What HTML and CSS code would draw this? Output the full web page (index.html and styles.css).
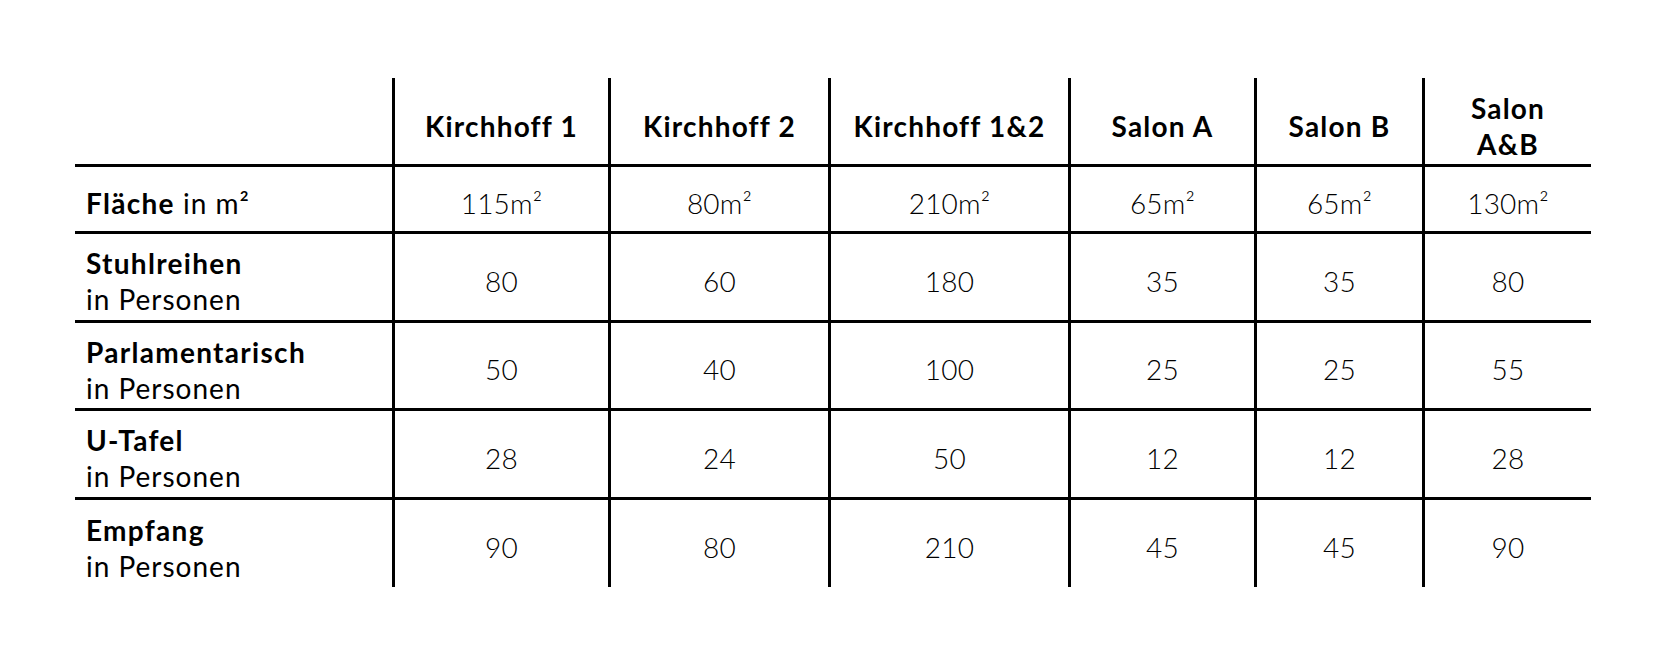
FILE: index.html
```html
<!DOCTYPE html>
<html lang="de">
<head>
<meta charset="utf-8">
<title>Räume</title>
<link rel="stylesheet" href="styles.css">
</head>
<body>
<div class="page">
  <div class="grid" role="table">
    <div class="cell head label"></div>
    <div class="cell head">Kirchhoff 1</div>
    <div class="cell head">Kirchhoff 2</div>
    <div class="cell head">Kirchhoff 1&amp;2</div>
    <div class="cell head">Salon A</div>
    <div class="cell head">Salon B</div>
    <div class="cell head">Salon<br>A&amp;B</div>

    <div class="cell label row single"><span><b>Fläche</b> in m²</span></div>
    <div class="cell row num">115m²</div>
    <div class="cell row num">80m²</div>
    <div class="cell row num">210m²</div>
    <div class="cell row num">65m²</div>
    <div class="cell row num">65m²</div>
    <div class="cell row num">130m²</div>

    <div class="cell label row"><span><b>Stuhlreihen</b><br>in Personen</span></div>
    <div class="cell row num">80</div>
    <div class="cell row num">60</div>
    <div class="cell row num">180</div>
    <div class="cell row num">35</div>
    <div class="cell row num">35</div>
    <div class="cell row num">80</div>

    <div class="cell label row"><span><b>Parlamentarisch</b><br>in Personen</span></div>
    <div class="cell row num">50</div>
    <div class="cell row num">40</div>
    <div class="cell row num">100</div>
    <div class="cell row num">25</div>
    <div class="cell row num">25</div>
    <div class="cell row num">55</div>

    <div class="cell label row"><span><b>U-Tafel</b><br>in Personen</span></div>
    <div class="cell row num">28</div>
    <div class="cell row num">24</div>
    <div class="cell row num">50</div>
    <div class="cell row num">12</div>
    <div class="cell row num">12</div>
    <div class="cell row num">28</div>

    <div class="cell label row"><span><b>Empfang</b><br>in Personen</span></div>
    <div class="cell row num">90</div>
    <div class="cell row num">80</div>
    <div class="cell row num">210</div>
    <div class="cell row num">45</div>
    <div class="cell row num">45</div>
    <div class="cell row num">90</div>
  </div>
</div>
</body>
</html>
```
FILE: styles.css
```css
html, body {
  margin: 0;
  padding: 0;
  background: #ffffff;
}

.page {
  padding: 78px 0 0 75px;
  font-family: "Lato", "Liberation Sans", sans-serif;
  color: #000000;
  font-size: 28px;
}

.grid {
  display: grid;
  width: 1516px;
  grid-template-columns: 317px 216px 220px 240px 186px 168px 169px;
  grid-template-rows: 86px 67px 89px 88px 89px 90px;
}

.cell {
  box-sizing: border-box;
  display: flex;
  align-items: center;
  justify-content: center;
  text-align: center;
  border-left: 3px solid #000;
}

.cell.label {
  border-left: none;
  justify-content: flex-start;
  text-align: left;
  padding-left: 11px;
  padding-top: 8px;
  line-height: 36px;
  letter-spacing: 1px;
}

.cell.label.single {
  padding-top: 8px;
  line-height: normal;
}

.cell.row {
  border-top: 3px solid #000;
}

.num {
  font-weight: 300;
  padding-top: 7px;
  letter-spacing: 0.2px;
}

.head {
  font-weight: 700;
  line-height: 36px;
  padding-top: 10px;
  letter-spacing: 1.2px;
}

.cell.head.label {
  padding-top: 10px;
}

b {
  font-weight: 700;
  letter-spacing: 1.3px;
}
```
